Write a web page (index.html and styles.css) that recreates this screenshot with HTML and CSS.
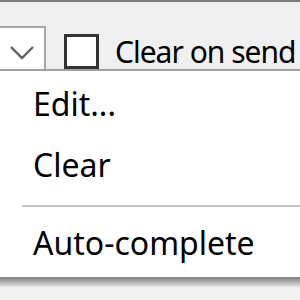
FILE: index.html
```html
<!DOCTYPE html>
<html lang="en">
<head>
    <meta charset="UTF-8">
    <title>Clear on send</title>
    <link rel="stylesheet" href="styles.css">
</head>
<body>
    <div class="toolbar">
        <div class="combo">
            <svg class="chevron" width="24" height="14" viewBox="0 0 24 14">
                <path d="M1 1 L12 12 L23 1" fill="none" stroke="#606060" stroke-width="2.4"/>
            </svg>
        </div>
        <label class="check">
            <span class="box"></span>
            <span class="check-text">Clear on send</span>
        </label>
    </div>
    <div class="menu">
        <div class="menu-item">Edit...</div>
        <div class="menu-item">Clear</div>
        <div class="separator"></div>
        <div class="menu-item last">Auto-complete</div>
    </div>
    <div class="shadow"></div>
</body>
</html>
```

FILE: styles.css
```css
body {
    margin: 0;
    width: 300px;
    height: 300px;
    overflow: hidden;
    background: #f2f2f2;
    font-family: "Noto Sans", "Open Sans", sans-serif;
    color: #000;
}

.toolbar {
    border-top: 2px solid #7c7c7c;
    background: #f0f0f0;
    height: 67px;
    display: flex;
    align-items: flex-end;
}

.combo {
    flex-shrink: 0;
    width: 46px;
    height: 43px;
    background: #fff;
    border: 2px solid #a6a6a6;
    border-left: none;
    border-bottom: none;
    display: flex;
    align-items: center;
    justify-content: center;
    box-sizing: border-box;
}

.chevron {
    margin-top: 8px;
}

.check {
    display: flex;
    align-items: center;
    margin-left: 18px;
    height: 35px;
    white-space: nowrap;
    flex-shrink: 0;
}

.box {
    flex-shrink: 0;
    width: 29px;
    height: 29px;
    border: 3px solid #333;
    background: #fff;
}

.check-text {
    font-size: 30px;
    margin-left: 16px;
    margin-top: 0;
    letter-spacing: -1px;
}

.menu {
    background: #fff;
    border-top: 2px solid #a0a0a0;
    padding: 2px 0 4px;
}

.menu-item {
    font-size: 32px;
    line-height: 61px;
    padding-left: 33px;
    white-space: nowrap;
}

.separator {
    height: 2px;
    background: #c4c4c4;
    margin: 10px 0 5px 22px;
}

.shadow {
    height: 10px;
    background: linear-gradient(#828282, #b8b8b8 60%, #e6e6e6);
}
```
